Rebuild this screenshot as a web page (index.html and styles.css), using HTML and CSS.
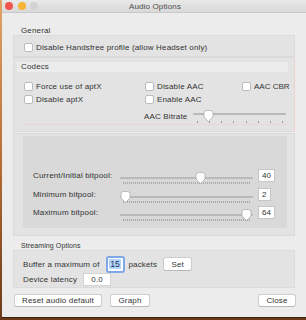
FILE: index.html
```html
<!DOCTYPE html>
<html>
<head>
<meta charset="utf-8">
<link rel="stylesheet" href="styles.css">
</head>
<body>
<div class="win">
  <div class="titlebar">
    <div class="lights"><span class="light red"></span><span class="light yellow"></span><span class="light grey"></span></div>
    <div class="title">Audio Options</div>
  </div>
  <div class="content">
    <div class="sec-label general-label">General</div>
    <div class="box general">
      <label class="cb"><span class="check"></span>Disable Handsfree profile (allow Headset only)</label>
    </div>

    <div class="box codecs">
      <div class="codec-head">Codecs</div>
      <div class="codec-grid">
        <label class="cb"><span class="check"></span>Force use of aptX</label>
        <label class="cb"><span class="check"></span>Disable AAC</label>
        <label class="cb cbr"><span class="check"></span>AAC CBR</label>
        <label class="cb"><span class="check"></span>Disable aptX</label>
        <label class="cb"><span class="check"></span>Enable AAC</label>
        <span></span>
      </div>
      <div class="bitrate-row">
        <span class="bitrate-label">AAC Bitrate</span>
        <div class="slider aac">
          <div class="track"></div>
          <div class="ticks-sparse"><i></i><i></i><i></i><i></i><i></i><i></i><i></i><i></i></div>
          <svg class="knob" style="left:10px" width="11" height="12" viewBox="0 0 11 12"><path d="M1 3 Q1 0.5 3.5 0.5 H7.5 Q10 0.5 10 3 V7 L5.5 11.5 L1 7 Z" fill="#fff" stroke="#adadad" stroke-width="0.8"/></svg>
        </div>
      </div>
    </div>

    <div class="box bitpool-outer">
      <div class="bitpool">
        <div class="bp-row">
          <span class="bp-label">Current/Initial bitpool:</span>
          <div class="slider bp">
            <div class="track"></div>
            <div class="ticks-dense"></div>
            <svg class="knob" style="left:75px" width="11" height="12" viewBox="0 0 11 12"><path d="M1 3 Q1 0.5 3.5 0.5 H7.5 Q10 0.5 10 3 V7 L5.5 11.5 L1 7 Z" fill="#fff" stroke="#adadad" stroke-width="0.8"/></svg>
          </div>
          <span class="val">40</span>
        </div>
        <div class="bp-row">
          <span class="bp-label">Minimum bitpool:</span>
          <div class="slider bp">
            <div class="track"></div>
            <div class="ticks-dense"></div>
            <svg class="knob" style="left:0px" width="11" height="12" viewBox="0 0 11 12"><path d="M1 3 Q1 0.5 3.5 0.5 H7.5 Q10 0.5 10 3 V7 L5.5 11.5 L1 7 Z" fill="#fff" stroke="#adadad" stroke-width="0.8"/></svg>
          </div>
          <span class="val">2</span>
        </div>
        <div class="bp-row">
          <span class="bp-label">Maximum bitpool:</span>
          <div class="slider bp">
            <div class="track"></div>
            <div class="ticks-dense"></div>
            <svg class="knob" style="left:121px" width="11" height="12" viewBox="0 0 11 12"><path d="M1 3 Q1 0.5 3.5 0.5 H7.5 Q10 0.5 10 3 V7 L5.5 11.5 L1 7 Z" fill="#fff" stroke="#adadad" stroke-width="0.8"/></svg>
          </div>
          <span class="val">64</span>
        </div>
      </div>
    </div>

    <div class="sec-label stream-label">Streaming Options</div>
    <div class="box streaming">
      <div class="st-row1">
        <span>Buffer a maximum of</span>
        <span class="focus-field"><span class="sel">15</span></span>
        <span class="packets">packets</span>
        <span class="btn set">Set</span>
      </div>
      <div class="st-row2">
        <span>Device latency</span>
        <span class="latency">0.0</span>
      </div>
    </div>

    <div class="buttons">
      <span class="btn reset">Reset audio default</span>
      <span class="btn graph">Graph</span>
      <span class="btn close">Close</span>
    </div>
  </div>
</div>
</body>
</html>
```

FILE: styles.css
```css
* { box-sizing: border-box; }

body {
  margin: 0;
  width: 306px;
  height: 320px;
  overflow: hidden;
  background: linear-gradient(#e4a466 0%, #b06a32 55%, #6a3a18 100%);
  font-family: "Liberation Sans", Arial, sans-serif;
  font-size: 8px;
  letter-spacing: 0.15px;
  color: #333333;
}

.win {
  margin-left: 2px;
  width: 304px;
  height: 317px;
  background: #ececec;
  display: flex;
  flex-direction: column;
  box-shadow: 0 1px 0 #3a2410;
}

.titlebar {
  height: 13px;
  border-bottom: 1px solid #c9c9c9;
  background: linear-gradient(#e9e9e9, #d9d9d9);
  display: flex;
  align-items: center;
  justify-content: center;
  position: relative;
}

.lights {
  position: absolute;
  left: 3px;
  top: 2px;
  display: flex;
  gap: 5px;
}

.light {
  width: 8px;
  height: 8px;
  border-radius: 50%;
}
.light.red { background: #f2574f; }
.light.yellow { background: #f5b535; }
.light.grey { background: #d3d3d3; margin-left: -1px; }

.title {
  color: #4a4a4a;
  font-size: 8px;
  line-height: 9px;
  margin-top: 1px;
  margin-left: 2px;
}

.content {
  padding: 0 11px;
  display: flex;
  flex-direction: column;
}

.sec-label {
  padding-left: 8px;
  line-height: 9px;
  height: 9px;
}
.general-label { margin-top: 13px; }
.stream-label { margin-top: 5px; font-size: 7px; letter-spacing: 0.1px; }

.box {
  background: #e3e3e3;
  border: 1px solid #dbdbdb;
}

.general {
  height: 22px;
  padding: 7px 0 0 10px;
}

.cb {
  display: flex;
  align-items: center;
  height: 9px;
  line-height: 9px;
  white-space: nowrap;
}

.cb.cbr { letter-spacing: 0; }

.check {
  width: 9px;
  height: 9px;
  background: #fff;
  border: 1px solid #bcbcbc;
  border-radius: 2px;
  margin-right: 3px;
  flex: none;
}

.codecs {
  height: 75px;
  border-right-color: #f0cfcf;
  padding: 4px 0 0 10px;
}

.codec-head {
  height: 10px;
  line-height: 10px;
  background: #ececec;
  margin-left: -7px;
  width: 271px;
  padding-left: 4px;
}

.codec-grid {
  margin-top: 8px;
  display: grid;
  grid-template-columns: 121px 97px auto;
  grid-auto-rows: 13px;
  align-items: center;
}

.bitrate-row {
  margin-top: 4px;
  display: flex;
  align-items: flex-start;
  padding-left: 120px;
  border-bottom: 1px solid #f2d2d2;
  width: 263px;
  height: 15px;
}

.bitrate-label {
  width: 49px;
  line-height: 9px;
  margin-top: 2px;
}

.slider {
  position: relative;
  flex: none;
}

.slider.aac {
  width: 93px;
  height: 14px;
}
.slider.aac .track { top: 3px; }
.slider.aac .knob { top: 0px; }

.track {
  position: absolute;
  left: 0;
  right: 0;
  height: 2px;
  background: #b9b9b9;
  border-radius: 1px;
}

.knob {
  position: absolute;
  display: block;
}

.ticks-sparse {
  position: absolute;
  left: 4px;
  right: 3px;
  top: 11px;
  height: 2px;
  display: flex;
  justify-content: space-between;
}
.ticks-sparse i {
  width: 1px;
  height: 2px;
  background: #9c9c9c;
}

.bitpool-outer {
  height: 103px;
  margin-top: 1px;
  padding: 2px 7px 7px 9px;
}

.bitpool {
  height: 92px;
  background: #d9d9d9;
  padding: 31px 0 0 10px;
  display: flex;
  flex-direction: column;
  gap: 1.5px;
}

.bp-row {
  height: 17px;
  display: flex;
  align-items: center;
}

.bp-label {
  width: 87px;
  flex: none;
  line-height: 9px;
}

.slider.bp {
  width: 133px;
  height: 17px;
}
.slider.bp .track { top: 10px; }
.slider.bp .knob { top: 5px; }

.ticks-dense {
  position: absolute;
  left: 3px;
  right: 3px;
  top: 15px;
  height: 2px;
  background: repeating-linear-gradient(to right, #a9a9a9 0 1px, transparent 1px 2px);
}

.val {
  margin-left: 5px;
  height: 13px;
  line-height: 11px;
  padding: 0 3px;
  background: #fff;
  border: 1px solid #c6c6c6;
}

.streaming {
  height: 38px;
  padding: 4px 0 0 9px;
}

.st-row1 {
  height: 18px;
  display: flex;
  align-items: center;
}

.focus-field {
  margin-left: 6px;
  width: 19px;
  height: 17px;
  border: 2px solid #7fa8ea;
  border-radius: 3px;
  background: #fff;
  display: flex;
  align-items: center;
  justify-content: center;
}
.sel {
  background: #b4d3fb;
  color: #1b2f5a;
  line-height: 10px;
  padding: 0 1px;
  font-size: 8.5px;
}

.packets { margin-left: 4px; }

.btn {
  display: flex;
  align-items: center;
  justify-content: center;
  background: #fff;
  border: 1px solid #cdcdcd;
  border-bottom-color: #b9b9b9;
  border-radius: 3px;
  height: 14px;
  line-height: 11px;
}

.set {
  margin-left: 6px;
  width: 29px;
}

.st-row2 {
  height: 13px;
  display: flex;
  align-items: center;
}

.latency {
  margin-left: 6px;
  width: 28px;
  height: 13px;
  background: #fff;
  border: 1px solid #d3d3d3;
  text-align: center;
  line-height: 11px;
}

.buttons {
  margin-top: 6px;
  display: flex;
  height: 13px;
}
.buttons .btn { height: 13px; }
.reset { margin-left: 1px; width: 88px; }
.graph { margin-left: 8px; width: 40px; }
.close { margin-left: auto; margin-right: -1px; width: 38px; }
```
